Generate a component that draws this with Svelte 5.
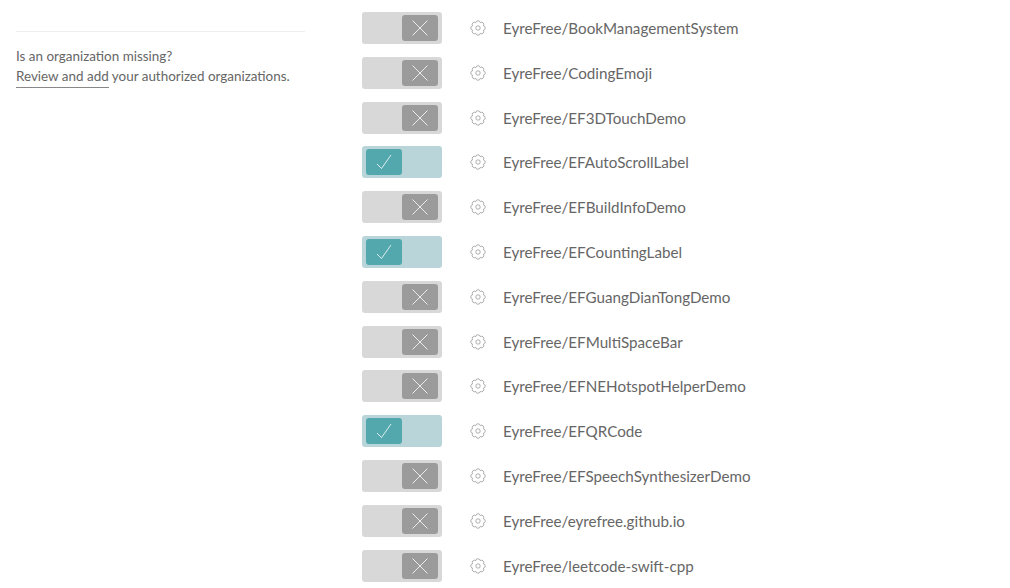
<script>
	const repos = [
		{ name: 'BookManagementSystem', on: false },
		{ name: 'CodingEmoji', on: false },
		{ name: 'EF3DTouchDemo', on: false },
		{ name: 'EFAutoScrollLabel', on: true },
		{ name: 'EFBuildInfoDemo', on: false },
		{ name: 'EFCountingLabel', on: true },
		{ name: 'EFGuangDianTongDemo', on: false },
		{ name: 'EFMultiSpaceBar', on: false },
		{ name: 'EFNEHotspotHelperDemo', on: false },
		{ name: 'EFQRCode', on: true },
		{ name: 'EFSpeechSynthesizerDemo', on: false },
		{ name: 'eyrefree.github.io', on: false },
		{ name: 'leetcode-swift-cpp', on: false }
	];

	// eight rounded lobes around the centre of a 16x16 box
	function gearPath() {
		let d = '';
		for (let i = 0; i <= 8; i++) {
			const a = ((i * 45 + 22.5) * Math.PI) / 180;
			const x = (8 + 5.8 * Math.cos(a)).toFixed(2);
			const y = (8 + 5.8 * Math.sin(a)).toFixed(2);
			d += i === 0 ? `M${x} ${y}` : `A2.25 2.25 0 0 1 ${x} ${y}`;
		}
		return d + 'z';
	}
	const gear = gearPath();
</script>

<div class="page">
	<aside class="sidebar">
		<p class="missing">
			Is an organization missing?<br />
			<a href="#review">Review and add</a> your authorized organizations.
		</p>
	</aside>

	<ul class="repos">
		{#each repos as repo}
			<li>
				<div class="toggle" class:on={repo.on}>
					<div class="knob">
						<svg width="16" height="16" viewBox="0 0 16 16" fill="none" stroke="#fff" stroke-width="0.8">
							{#if repo.on}
								<path d="M1 10l4.5 4.5L15 1" />
							{:else}
								<path d="M.5.5l15 15M15.5.5l-15 15" />
							{/if}
						</svg>
					</div>
				</div>
				<svg class="gear" width="16" height="16" viewBox="0 0 16 16" fill="none" stroke="#999" stroke-width="0.8">
					<circle cx="8" cy="8" r="2.2" />
					<path d={gear} />
				</svg>
				<span class="name">EyreFree/{repo.name}</span>
			</li>
		{/each}
	</ul>
</div>

<style>
	:global(body) {
		background: #fff;
		font-family: Lato, "Open Sans", sans-serif;
		color: #666;
		overflow: hidden;
	}

	.page {
		display: flex;
		height: 588px;
		overflow: hidden;
	}

	.sidebar {
		width: 289px;
		margin-left: 16px;
		margin-right: 57px;
		flex-shrink: 0;
	}

	.missing {
		margin: 31px 0 0;
		padding-top: 14px;
		border-top: 1px solid #eee;
		font-size: 13.45px;
		line-height: 20px;
	}

	.missing a {
		display: inline-block;
		color: #666;
		text-decoration: none;
		border-bottom: 1px solid #888;
		line-height: 21px;
	}

	.repos {
		list-style: none;
		margin: 0;
		padding: 12px 0 0;
	}

	.repos li {
		display: flex;
		align-items: center;
		height: 32px;
		margin-bottom: 12.8px;
	}

	.toggle {
		display: flex;
		justify-content: flex-end;
		align-items: center;
		width: 80px;
		height: 32px;
		padding: 0 4px;
		box-sizing: border-box;
		background: #d8d8d8;
		border-radius: 3px;
	}

	.toggle.on {
		justify-content: flex-start;
		background: #bad5d9;
	}

	.knob {
		display: flex;
		align-items: center;
		justify-content: center;
		width: 36px;
		height: 26px;
		background: #9b9b9b;
		border-radius: 3px;
	}

	.on .knob {
		background: #53a8ae;
	}

	.gear {
		margin-left: 27.5px;
		flex-shrink: 0;
	}

	.name {
		margin-left: 17.5px;
		font-size: 15.2px;
		color: #666;
	}
</style>
